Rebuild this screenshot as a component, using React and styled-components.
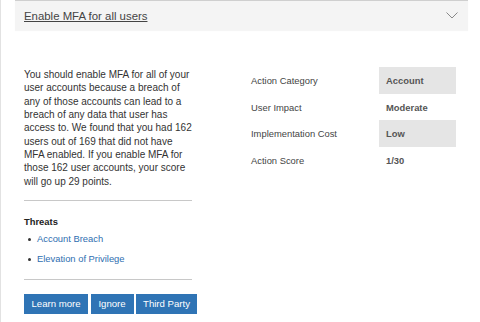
import styled, { createGlobalStyle } from "styled-components";

const GlobalStyle = createGlobalStyle`
  body {
    margin: 0;
    background: #fff;
    font-family: "Liberation Sans", Arial, sans-serif;
  }
`;

const Page = styled.div`
  min-height: 322px;
  border-left: 1px solid #e2e2e2;
  padding: 0 12px 0 14px;
  box-sizing: border-box;
`;

const Header = styled.div`
  display: flex;
  align-items: center;
  justify-content: space-between;
  height: 29px;
  padding: 0 10px 0 9px;
  background: #f4f4f4;
  border-top: 1px solid #cfcfcf;
  box-shadow: 0 1px 1px rgba(0, 0, 0, 0.04);
`;

const HeaderTitle = styled.a`
  font-size: 11.4px;
  color: #444;
  text-decoration: underline;
`;

const Body = styled.div`
  display: flex;
  padding: 38px 0 0 9px;
`;

const LeftCol = styled.div`
  width: 168px;
  flex: none;
`;

const Description = styled.p`
  margin: 0;
  font-size: 10px;
  line-height: 13.35px;
  color: #333;
  padding-bottom: 12px;
  border-bottom: 1px solid #c8c8c8;
`;

const ThreatBlock = styled.div`
  padding: 15px 0 14px;
  border-bottom: 1px solid #c8c8c8;
`;

const ThreatTitle = styled.div`
  font-size: 9.4px;
  line-height: 12px;
  font-weight: bold;
  color: #222;
  margin-bottom: 5px;
`;

const ThreatList = styled.ul`
  margin: 0;
  padding: 0 0 0 13px;
  list-style: none;
`;

const ThreatItem = styled.li`
  position: relative;
  font-size: 9.4px;
  line-height: 12px;
  color: #2e6eb0;
  margin-bottom: 7.5px;

  &:last-child {
    margin-bottom: 0;
  }

  &::before {
    content: "";
    position: absolute;
    left: -9px;
    top: 5px;
    width: 3px;
    height: 3px;
    border-radius: 50%;
    background: #333;
  }
`;

const Actions = styled.div`
  display: flex;
  gap: 2.5px;
  margin-top: 14px;
`;

const Button = styled.button`
  flex: none;
  width: ${(p) => p.$w}px;
  height: 20px;
  padding: 0;
  border: none;
  background: #2f74b5;
  color: #fff;
  font-family: "Liberation Sans", Arial, sans-serif;
  font-size: 9.6px;
  white-space: nowrap;
  cursor: pointer;
`;

const RightCol = styled.div`
  margin-left: 59px;
  margin-top: -1px;
  display: grid;
  grid-template-columns: 128px 77px;
  grid-auto-rows: 26.7px;
  align-content: start;
`;

const Label = styled.div`
  display: flex;
  align-items: center;
  font-size: 9.4px;
  color: #444;
`;

const Value = styled.div`
  display: flex;
  align-items: center;
  padding-left: 7px;
  font-size: 9.4px;
  font-weight: bold;
  color: #555;
  background: ${(p) => (p.$shaded ? "#e5e5e5" : "transparent")};
`;

const Chevron = () => (
  <svg width="12" height="7" viewBox="0 0 12 7" fill="none">
    <path d="M0.5 0.5 L6 6 L11.5 0.5" stroke="#888" strokeWidth="1" />
  </svg>
);

const details = [
  { label: "Action Category", value: "Account", shaded: true },
  { label: "User Impact", value: "Moderate" },
  { label: "Implementation Cost", value: "Low", shaded: true },
  { label: "Action Score", value: "1/30" },
];

export default function App() {
  return (
    <>
      <GlobalStyle />
      <Page>
        <Header>
          <HeaderTitle>Enable MFA for all users</HeaderTitle>
          <Chevron />
        </Header>
        <Body>
          <LeftCol>
            <Description>
              You should enable MFA for all of your user accounts because a
              breach of any of those accounts can lead to a breach of any data
              that user has access to. We found that you had 162 users out of
              169 that did not have MFA enabled. If you enable MFA for those
              162 user accounts, your score will go up 29 points.
            </Description>
            <ThreatBlock>
              <ThreatTitle>Threats</ThreatTitle>
              <ThreatList>
                <ThreatItem>Account Breach</ThreatItem>
                <ThreatItem>Elevation of Privilege</ThreatItem>
              </ThreatList>
            </ThreatBlock>
            <Actions>
              <Button $w={64}>Learn more</Button>
              <Button $w={43}>Ignore</Button>
              <Button $w={61}>Third Party</Button>
            </Actions>
          </LeftCol>
          <RightCol>
            {details.map((d) => [
              <Label key={d.label}>{d.label}</Label>,
              <Value key={d.label + "v"} $shaded={d.shaded}>
                {d.value}
              </Value>,
            ])}
          </RightCol>
        </Body>
      </Page>
    </>
  );
}
